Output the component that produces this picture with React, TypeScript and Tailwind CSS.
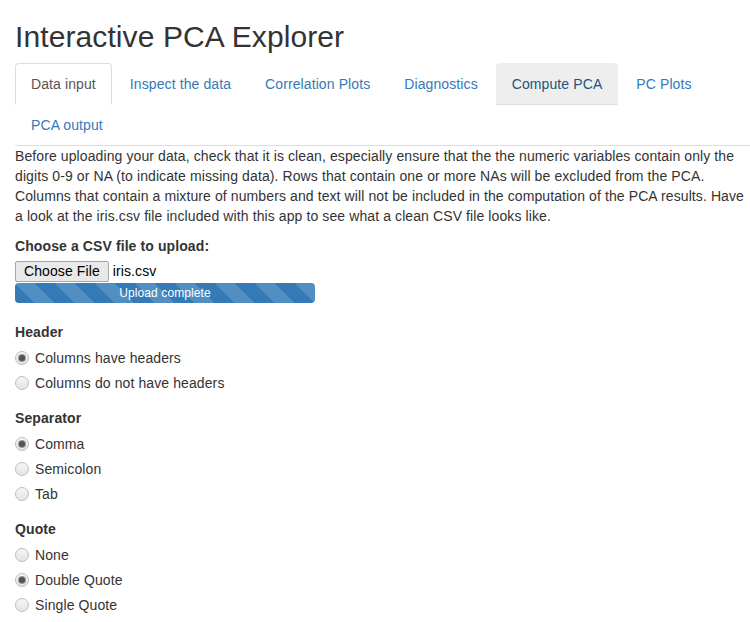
import React from "react";

const TABS = [
  { label: "Data input", active: true },
  { label: "Inspect the data" },
  { label: "Correlation Plots" },
  { label: "Diagnostics" },
  { label: "Compute PCA", hover: true },
  { label: "PC Plots" },
  { label: "PCA output" },
];

const GROUPS = [
  {
    title: "Header",
    options: ["Columns have headers", "Columns do not have headers"],
    selected: 0,
  },
  { title: "Separator", options: ["Comma", "Semicolon", "Tab"], selected: 0 },
  { title: "Quote", options: ["None", "Double Quote", "Single Quote"], selected: 1 },
];

function Radio({ checked }: { checked: boolean }) {
  return (
    <span className="mr-[6px] flex h-[14px] w-[14px] shrink-0 items-center justify-center rounded-full border border-[#bdbdbd] bg-gradient-to-b from-[#f6f6f6] to-[#e4e4e4]">
      {checked && <span className="h-[6px] w-[6px] rounded-full bg-[#555] ring-1 ring-[#999]" />}
    </span>
  );
}

export default function App() {
  return (
    <div className="h-[622px] w-[750px] overflow-hidden bg-white font-['Liberation_Sans',Arial,sans-serif] text-[14px] leading-[20px] tracking-[0.1px] text-[#333]">
      <div className="w-[800px] px-[15px]">
        <h2 className="mt-[20px] mb-[10px] text-[30px] leading-[33px] font-normal">
          Interactive PCA Explorer
        </h2>

        {/* Tabs */}
        <ul className="flex flex-wrap border-b border-[#ddd]">
          {TABS.map((t) => (
            <li key={t.label} className="-mb-px mr-[2px]">
              <a
                className={
                  t.active
                    ? "block rounded-t-[4px] border border-[#ddd] border-b-transparent bg-white px-[15px] py-[10px] text-[#555]"
                    : t.hover
                      ? "block rounded-t-[4px] border border-[#eee] border-b-[#ddd] bg-[#eee] px-[15px] py-[10px] text-[#23527c]"
                      : "block rounded-t-[4px] border border-transparent px-[15px] py-[10px] text-[#337ab7]"
                }
              >
                {t.label}
              </a>
            </li>
          ))}
        </ul>

        {/* Data input pane */}
        <div className="w-[733px]">
          <p className="mb-[10px]">
            Before uploading your data, check that it is clean, especially ensure
            that the the numeric variables contain only the digits 0-9 or NA (to
            indicate missing data). Rows that contain one or more NAs will be
            excluded from the PCA. Columns that contain a mixture of numbers and
            text will not be included in the computation of the PCA results. Have
            a look at the iris.csv file included with this app to see what a clean
            CSV file looks like.
          </p>

          <label className="mb-[5px] block font-bold">Choose a CSV file to upload:</label>
          <div className="flex items-center">
            <button className="h-[21px] rounded-[2px] border border-[#a6a6a6] bg-[#e9e9e9] px-[8px] text-[14px] leading-[19px] text-black">
              Choose File
            </button>
            <span className="ml-[4px] leading-[21px] text-black">iris.csv</span>
          </div>
          <div className="mt-[1px] h-[20px] w-[300px] overflow-hidden rounded-[4px] bg-[#337ab7] bg-[linear-gradient(45deg,rgba(255,255,255,.15)_25%,transparent_25%,transparent_50%,rgba(255,255,255,.15)_50%,rgba(255,255,255,.15)_75%,transparent_75%,transparent)] bg-[length:40px_40px] text-center text-[12px] leading-[20px] text-white">
            Upload complete
          </div>

          <div className="mt-[19px] flex flex-col gap-[15px]">
            {GROUPS.map((g) => (
              <div key={g.title}>
                <label className="block font-bold">{g.title}</label>
                <div className="mt-[6px] flex flex-col gap-[5px]">
                  {g.options.map((o, i) => (
                    <div key={o} className="flex h-[20px] items-center">
                      <Radio checked={i === g.selected} />
                      <span>{o}</span>
                    </div>
                  ))}
                </div>
              </div>
            ))}
          </div>
        </div>
      </div>
    </div>
  );
}
